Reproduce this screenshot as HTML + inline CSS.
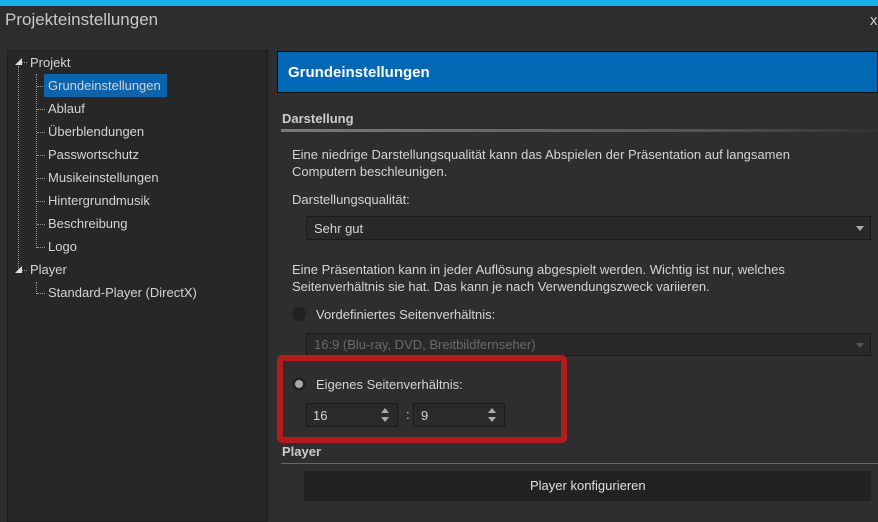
<!DOCTYPE html><html><head><style>
body{margin:0;width:878px;height:517px;overflow:hidden;background:#2e2e2e;font-family:"Liberation Sans",sans-serif;color:#d0d0d0;position:relative;font-size:13px}
.a{position:absolute;white-space:nowrap}
.t{font-size:13px;color:#d4d4d4}
.dd{position:absolute;background:#292929;border:1px solid #1a1a1a;box-sizing:border-box}
.arr{position:absolute;right:6px;top:9px;width:0;height:0;border-left:4px solid transparent;border-right:4px solid transparent;border-top:5px solid #aaa}
.sp{position:absolute;background:#2a2a2a;border:1px solid #1a1a1a;box-sizing:border-box;height:24px}
.up{position:absolute;right:8px;top:4px;border-left:4px solid transparent;border-right:4px solid transparent;border-bottom:5px solid #aaa}
.dn{position:absolute;right:8px;top:13px;border-left:4px solid transparent;border-right:4px solid transparent;border-top:5px solid #aaa}
.dot{position:absolute;border-left:1px dotted #999}
.hd{position:absolute;border-top:1px dotted #999;width:8px}
</style></head><body>
<div class="a" style="left:0;top:0;width:878px;height:6px;background:#1aaeee"></div>
<div class="a" style="left:0;top:6px;width:878px;height:32px;background:#2d2d2d;border-bottom:1px solid #262626"></div>
<div class="a" style="left:5px;top:10px;font-size:17px;color:#c8c8c8">Projekteinstellungen</div>
<div class="a" style="left:870px;top:12px;font-size:15px;color:#ccc">x</div>
<div class="a" style="left:7px;top:50px;width:259px;height:470px;background:#272727;border:1px solid #1e1e1e"></div>
<div class="dot" style="left:18px;top:66px;height:204px"></div>
<div class="dot" style="left:36px;top:74px;height:174px"></div>
<div class="dot" style="left:36px;top:282px;height:12px"></div>
<div class="a" style="left:15px;top:58px;border-left:7px solid transparent;border-bottom:7px solid #ddd"></div>
<div class="a" style="left:15px;top:266px;border-left:7px solid transparent;border-bottom:7px solid #ddd"></div>
<div class="hd" style="left:22px;top:62px;width:5px"></div><div class="hd" style="left:22px;top:270px;width:5px"></div>
<div class="hd" style="left:37px;top:86px"></div><div class="hd" style="left:37px;top:109px"></div><div class="hd" style="left:37px;top:132px"></div><div class="hd" style="left:37px;top:155px"></div><div class="hd" style="left:37px;top:178px"></div><div class="hd" style="left:37px;top:201px"></div><div class="hd" style="left:37px;top:224px"></div><div class="hd" style="left:37px;top:247px"></div><div class="hd" style="left:37px;top:293px"></div>
<div class="a" style="left:44px;top:74px;width:123px;height:23px;background:#0a64ae"></div>
<div class="a t" style="left:30px;top:55px">Projekt</div>
<div class="a t" style="left:48px;top:78px">Grundeinstellungen</div>
<div class="a t" style="left:48px;top:101px">Ablauf</div>
<div class="a t" style="left:48px;top:124px">Überblendungen</div>
<div class="a t" style="left:48px;top:147px">Passwortschutz</div>
<div class="a t" style="left:48px;top:170px">Musikeinstellungen</div>
<div class="a t" style="left:48px;top:193px">Hintergrundmusik</div>
<div class="a t" style="left:48px;top:216px">Beschreibung</div>
<div class="a t" style="left:48px;top:239px">Logo</div>
<div class="a t" style="left:30px;top:262px">Player</div>
<div class="a t" style="left:48px;top:285px">Standard-Player (DirectX)</div>
<div class="a" style="left:277px;top:51px;width:601px;height:42px;background:#0068b4;border:1px solid #111;box-sizing:border-box"></div>
<div class="a" style="left:288px;top:64px;font-size:15px;font-weight:bold;color:#fff">Grundeinstellungen</div>
<div class="a" style="left:282px;top:111px;font-weight:bold;color:#ccc">Darstellung</div>
<div class="a" style="left:281px;top:129px;width:597px;height:3px;background:linear-gradient(90deg,#7a7a7a,#555 70%,#333)"></div>
<div class="a t" style="left:292px;top:146px;line-height:17px">Eine niedrige Darstellungsqualität kann das Abspielen der Präsentation auf langsamen<br>Computern beschleunigen.</div>
<div class="a t" style="left:292px;top:192px">Darstellungsqualität:</div>
<div class="dd" style="left:306px;top:216px;width:565px;height:24px"><span class="a t" style="left:7px;top:4px">Sehr gut</span><div class="arr"></div></div>
<div class="a t" style="left:292px;top:261px;line-height:17px">Eine Präsentation kann in jeder Auflösung abgespielt werden. Wichtig ist nur, welches<br>Seitenverhältnis sie hat. Das kann je nach Verwendungszweck variieren.</div>
<div class="a" style="left:292px;top:307px;width:14px;height:14px;border-radius:50%;background:#222"></div>
<div class="a t" style="left:316px;top:307px">Vordefiniertes Seitenverhältnis:</div>
<div class="dd" style="left:306px;top:333px;width:565px;height:23px"><span class="a" style="left:7px;top:3px;color:#6a6a6a">16:9 (Blu-ray, DVD, Breitbildfernseher)</span><div class="arr" style="border-top-color:#555"></div></div>
<div class="a" style="left:277px;top:355px;width:290px;height:88px;border:6px solid #b31c1c;border-radius:5px;box-sizing:border-box;background:#2e2e2e"></div>
<div class="a" style="left:292px;top:377px;width:14px;height:14px;border-radius:50%;background:#222"></div>
<div class="a" style="left:295px;top:380px;width:8px;height:8px;border-radius:50%;background:#aaa"></div>
<div class="a t" style="left:316px;top:377px">Eigenes Seitenverhältnis:</div>
<div class="sp" style="left:306px;top:403px;width:92px"><span class="a t" style="left:6px;top:4px">16</span><div class="up"></div><div class="dn"></div></div>
<div class="a t" style="left:406px;top:407px">:</div>
<div class="sp" style="left:413px;top:403px;width:92px"><span class="a t" style="left:7px;top:4px">9</span><div class="up"></div><div class="dn"></div></div>
<div class="a" style="left:282px;top:444px;font-weight:bold;color:#ccc">Player</div>
<div class="a" style="left:281px;top:463px;width:597px;height:1px;background:#666"></div>
<div class="a" style="left:304px;top:471px;width:567px;height:30px;background:#222"></div>
<div class="a t" style="left:530px;top:478px;color:#e0e0e0">Player konfigurieren</div>
</body></html>
